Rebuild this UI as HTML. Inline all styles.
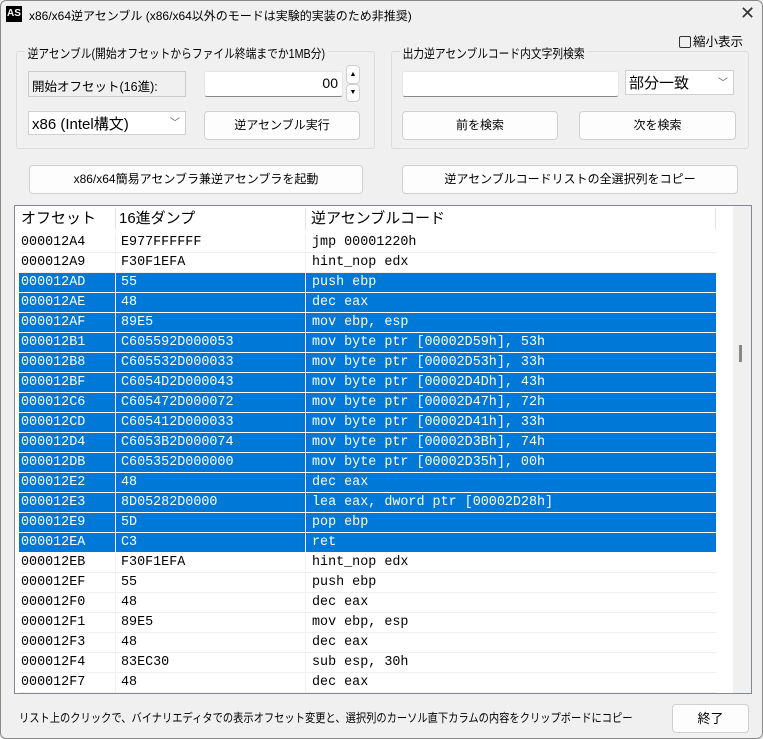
<!DOCTYPE html>
<html><head><meta charset="utf-8"><style>
*{box-sizing:border-box;margin:0;padding:0}
body{width:763px;height:739px;background:#f0f0f0;font-family:"Liberation Sans","Noto Sans CJK JP",sans-serif;font-size:12px;color:#000;position:relative;overflow:hidden;border:1px solid #8a8a8a;border-radius:6px}
.a{position:absolute;white-space:nowrap}
.btn{position:absolute;background:#fdfdfd;border:1px solid #d0d0d0;border-radius:4px;text-align:center;font-size:12px}
.grp{position:absolute;border:1px solid #dcdcdc;border-radius:3px}
.grp span{position:absolute;white-space:nowrap;top:-9px;left:8px;background:#f0f0f0;padding:0 3px;font-size:12.5px;transform:scaleX(0.86);transform-origin:left}
.inp{position:absolute;background:#fff;border:1px solid #e6e6e6;border-bottom:1px solid #888;border-radius:3px}
.list{position:absolute;left:13px;top:204px;width:738px;height:489px;border:1px solid #828790;background:#fff;overflow:hidden}
.row{position:absolute;left:4px;width:697px;height:20px;font-family:"Liberation Mono","Noto Sans CJK JP",monospace;font-size:13.4px;line-height:20px;border-bottom:1px solid #f0f0f0}
.row div{position:absolute;top:0}
.sel{background:#0078d7;color:#fff;border-bottom:1px solid #fff}
.c1{left:2px}.c2{left:102px}.c3{left:293px}
.sep{position:absolute;top:0;width:1px;height:100%;background:#fff}
</style></head><body>
<div class="a" style="left:5px;top:5px;width:16px;height:16px;border:1px solid #000;background:#000;color:#fff;font-size:10px;font-weight:bold;line-height:14px;text-align:center">AS</div>
<div class="a" style="left:28px;top:6px;font-size:12px">x86/x64逆アセンブル (x86/x64以外のモードは実験的実装のため非推奨)</div>
<div class="a" style="left:739px;top:2px;font-size:18px;color:#333">✕</div>

<div class="a" style="left:678px;top:30px;font-size:12.5px"><span style="display:inline-block;width:12px;height:12px;border:1px solid #333;border-radius:2px;vertical-align:-2px;margin-right:2px"></span>縮小表示</div>

<div class="grp" style="left:15px;top:50px;width:359px;height:98px"><span>逆アセンブル(開始オフセットからファイル終端までか1MB分)</span></div>
<div class="a" style="left:27px;top:70px;width:158px;height:26px;border:1px solid #ccc;background:#f0f0f0;padding:4px 3px;font-size:12.5px">開始オフセット(16進):</div>
<div class="inp" style="left:203px;top:70px;width:139px;height:26px;text-align:right;padding:3px 4px;font-size:14px">00</div>
<div class="btn" style="left:345px;top:64px;width:14px;height:19px;font-size:7px;line-height:17px">▲</div>
<div class="btn" style="left:345px;top:83px;width:14px;height:18px;font-size:7px;line-height:16px">▼</div>
<div class="a" style="left:27px;top:110px;width:158px;height:24px;background:#fff;border:1px solid #d0d0d0;padding:1px 3px;font-size:15px">x86 (Intel構文)<span style="position:absolute;right:5px;top:2px;font-size:10px;color:#555">﹀</span></div>
<div class="btn" style="left:203px;top:110px;width:156px;height:29px;line-height:27px">逆アセンブル実行</div>

<div class="grp" style="left:390px;top:50px;width:358px;height:98px"><span>出力逆アセンブルコード内文字列検索</span></div>
<div class="inp" style="left:401px;top:70px;width:217px;height:26px"></div>
<div class="a" style="left:624px;top:69px;width:109px;height:25px;background:#fff;border:1px solid #d0d0d0;padding:1px 3px;font-size:15px">部分一致<span style="position:absolute;right:5px;top:3px;font-size:10px;color:#555">﹀</span></div>
<div class="btn" style="left:401px;top:110px;width:156px;height:29px;line-height:27px">前を検索</div>
<div class="btn" style="left:578px;top:110px;width:157px;height:29px;line-height:27px">次を検索</div>

<div class="btn" style="left:28px;top:164px;width:334px;height:29px;line-height:27px">x86/x64簡易アセンブラ兼逆アセンブラを起動</div>
<div class="btn" style="left:401px;top:164px;width:336px;height:29px;line-height:27px">逆アセンブルコードリストの全選択列をコピー</div>

<div class="list">
<div class="a" style="left:0;top:0;width:701px;height:26px;font-size:15px;line-height:26px;background:#fff">
<div class="a" style="left:6px">オフセット</div><div class="a" style="left:104px">16進ダンプ</div><div class="a" style="left:296px">逆アセンブルコード</div>
<div class="a" style="left:100px;top:2px;width:1px;height:22px;background:#e5e5e5"></div>
<div class="a" style="left:290px;top:2px;width:1px;height:22px;background:#e5e5e5"></div>
<div class="a" style="left:700px;top:2px;width:1px;height:22px;background:#e5e5e5"></div>
</div>
<div class="a" style="left:718px;top:0;width:18px;height:487px;background:#f0f0f0"></div>
<div class="a" style="left:724px;top:139px;width:3px;height:17px;background:#888"></div>
<div id="rows"></div>
</div>

<div class="a" style="left:18px;top:708px;font-size:12px;transform:scaleX(0.855);transform-origin:left">リスト上のクリックで、バイナリエディタでの表示オフセット変更と、選択列のカーソル直下カラムの内容をクリップボードにコピー</div>
<div class="btn" style="left:671px;top:703px;width:77px;height:29px;line-height:27px;font-size:13px">終了</div>

<script>
var d=[["000012A4","E977FFFFFF","jmp 00001220h",0],["000012A9","F30F1EFA","hint_nop edx",0],["000012AD","55","push ebp",1],["000012AE","48","dec eax",1],["000012AF","89E5","mov ebp, esp",1],["000012B1","C605592D000053","mov byte ptr [00002D59h], 53h",1],["000012B8","C605532D000033","mov byte ptr [00002D53h], 33h",1],["000012BF","C6054D2D000043","mov byte ptr [00002D4Dh], 43h",1],["000012C6","C605472D000072","mov byte ptr [00002D47h], 72h",1],["000012CD","C605412D000033","mov byte ptr [00002D41h], 33h",1],["000012D4","C6053B2D000074","mov byte ptr [00002D3Bh], 74h",1],["000012DB","C605352D000000","mov byte ptr [00002D35h], 00h",1],["000012E2","48","dec eax",1],["000012E3","8D05282D0000","lea eax, dword ptr [00002D28h]",1],["000012E9","5D","pop ebp",1],["000012EA","C3","ret",1],["000012EB","F30F1EFA","hint_nop edx",0],["000012EF","55","push ebp",0],["000012F0","48","dec eax",0],["000012F1","89E5","mov ebp, esp",0],["000012F3","48","dec eax",0],["000012F4","83EC30","sub esp, 30h",0],["000012F7","48","dec eax",0]];
var h="";d.forEach(function(r,i){h+='<div class="row'+(r[3]?' sel':'')+'" style="top:'+(27+i*20)+'px"><div class="c1">'+r[0]+'</div><div class="c2">'+r[1]+'</div><div class="c3">'+r[2]+'</div><div class="sep" style="left:96px;background:'+(r[3]?'#fff':'#f0f0f0')+'"></div><div class="sep" style="left:286px;background:'+(r[3]?'#fff':'#f0f0f0')+'"></div></div>';});
document.getElementById("rows").innerHTML=h;
</script>
</body></html>
